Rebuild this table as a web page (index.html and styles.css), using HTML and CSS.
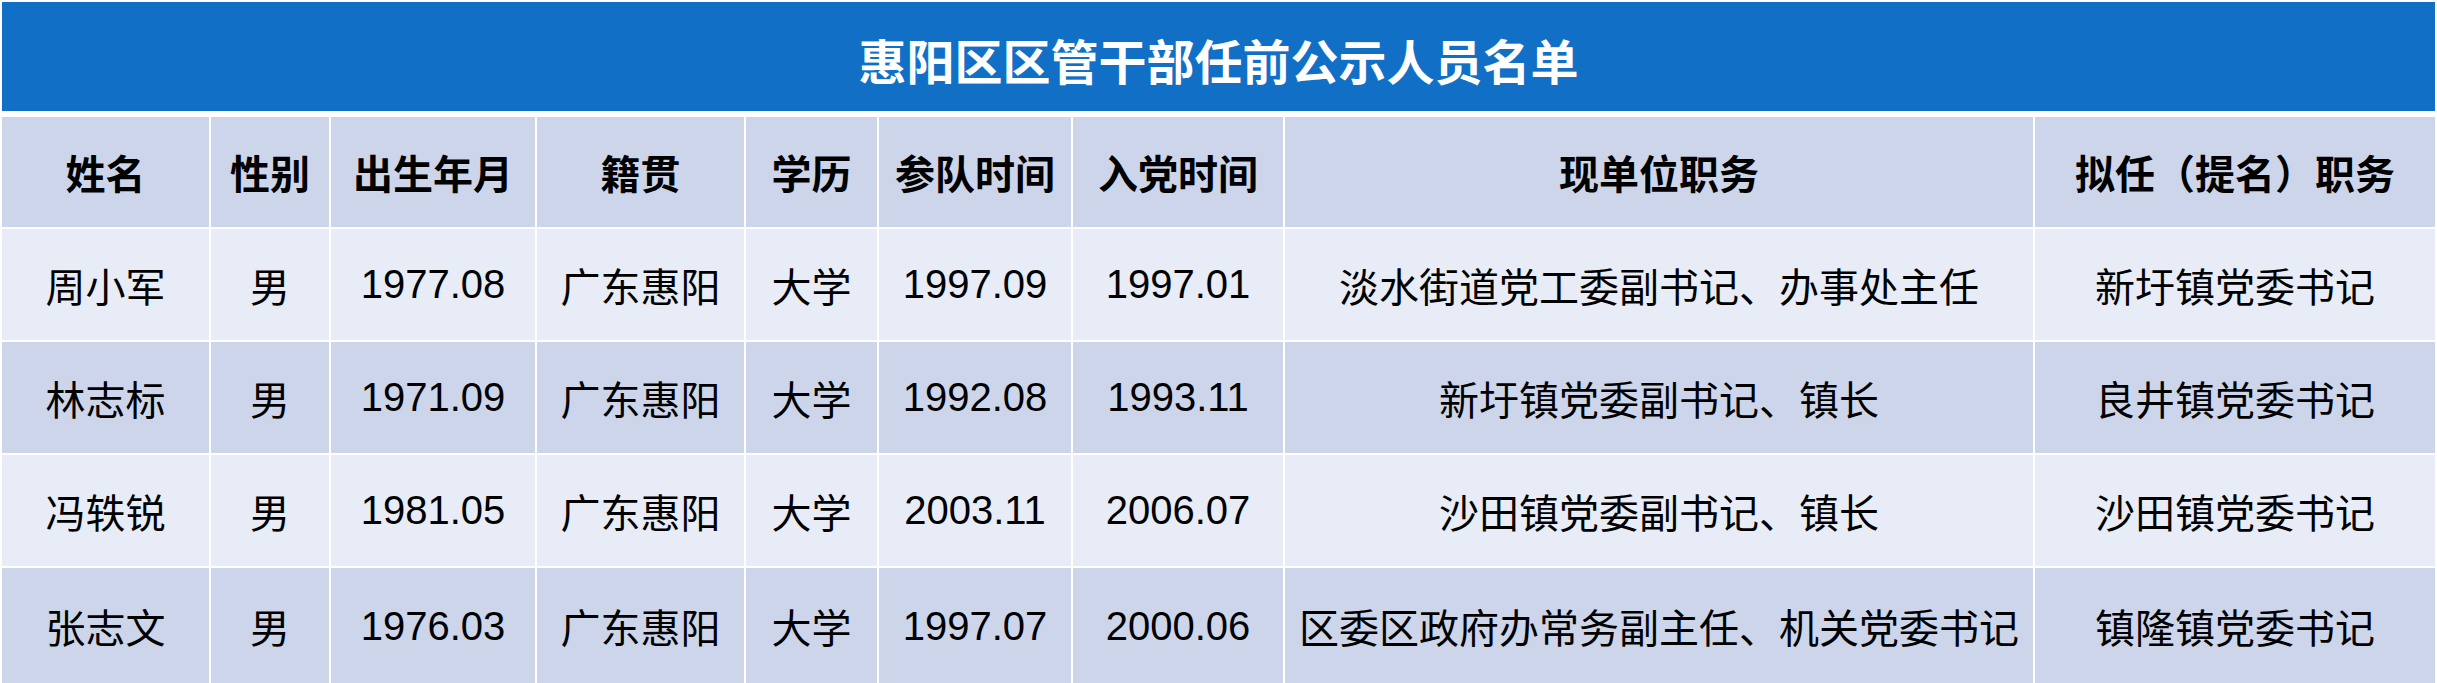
FILE: index.html
```html
<!DOCTYPE html>
<html lang="zh-CN">
<head>
<meta charset="utf-8">
<title>惠阳区区管干部任前公示人员名单</title>
<link rel="stylesheet" href="styles.css">
</head>
<body>
<div class="sheet">
  <div class="title">惠阳区区管干部任前公示人员名单</div>
  <div class="grid">
    <div class="cell head">姓名</div>
    <div class="cell head">性别</div>
    <div class="cell head">出生年月</div>
    <div class="cell head">籍贯</div>
    <div class="cell head">学历</div>
    <div class="cell head">参队时间</div>
    <div class="cell head">入党时间</div>
    <div class="cell head">现单位职务</div>
    <div class="cell head">拟任（提名）职务</div>

    <div class="cell light">周小军</div>
    <div class="cell light">男</div>
    <div class="cell light">1977.08</div>
    <div class="cell light">广东惠阳</div>
    <div class="cell light">大学</div>
    <div class="cell light">1997.09</div>
    <div class="cell light">1997.01</div>
    <div class="cell light">淡水街道党工委副书记、办事处主任</div>
    <div class="cell light">新圩镇党委书记</div>

    <div class="cell dark">林志标</div>
    <div class="cell dark">男</div>
    <div class="cell dark">1971.09</div>
    <div class="cell dark">广东惠阳</div>
    <div class="cell dark">大学</div>
    <div class="cell dark">1992.08</div>
    <div class="cell dark">1993.11</div>
    <div class="cell dark">新圩镇党委副书记、镇长</div>
    <div class="cell dark">良井镇党委书记</div>

    <div class="cell light">冯轶锐</div>
    <div class="cell light">男</div>
    <div class="cell light">1981.05</div>
    <div class="cell light">广东惠阳</div>
    <div class="cell light">大学</div>
    <div class="cell light">2003.11</div>
    <div class="cell light">2006.07</div>
    <div class="cell light">沙田镇党委副书记、镇长</div>
    <div class="cell light">沙田镇党委书记</div>

    <div class="cell dark">张志文</div>
    <div class="cell dark">男</div>
    <div class="cell dark">1976.03</div>
    <div class="cell dark">广东惠阳</div>
    <div class="cell dark">大学</div>
    <div class="cell dark">1997.07</div>
    <div class="cell dark">2000.06</div>
    <div class="cell dark">区委区政府办常务副主任、机关党委书记</div>
    <div class="cell dark">镇隆镇党委书记</div>
  </div>
</div>
</body>
</html>
```

FILE: styles.css
```css
html, body {
  margin: 0;
  padding: 0;
  background: #ffffff;
  overflow: hidden;
}

body {
  font-family: "Liberation Sans", "Noto Sans CJK SC", sans-serif;
  color: #000000;
}

.sheet {
  padding: 2px 2px 0 2px;
}

.title {
  height: 109px;
  background: #1170c6;
  color: #ffffff;
  font-family: "Noto Sans CJK SC", sans-serif;
  font-weight: 700;
  font-size: 48px;
  display: flex;
  align-items: center;
  justify-content: center;
  margin-bottom: 6px;
  padding-top: 4px;
  box-sizing: border-box;
}

.grid {
  display: grid;
  grid-template-columns: 207px 118px 204px 207px 131px 192px 210px 748px 400px;
  grid-template-rows: 110px 111px 111px 111px 116px;
  gap: 2px;
}

.cell {
  display: flex;
  align-items: center;
  justify-content: center;
  font-size: 40px;
  white-space: nowrap;
}

.head {
  background: #cdd5ea;
  font-family: "Noto Sans CJK SC", sans-serif;
  font-weight: 700;
}

.light {
  background: #e8ecf6;
}

.dark {
  background: #cdd5ea;
}
```
